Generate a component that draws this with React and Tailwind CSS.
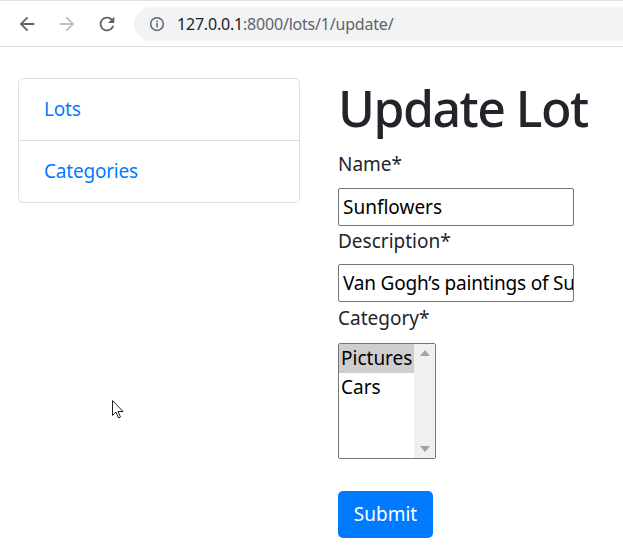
import React from "react";

const font = { fontFamily: '"Noto Sans", "Open Sans", sans-serif' };

function ChromeBar() {
  return (
    <div className="h-[47px] bg-white border-t border-[#dee1e6] border-b border-b-[#dadce0] flex items-center" style={{ fontFamily: '"Noto Sans", sans-serif' }}>
      <div className="flex items-center pl-[16px] gap-[18px]">
        <svg width="22" height="22" viewBox="0 0 24 24" className="text-[#5f6368]">
          <path d="M20 11H7.83l5.59-5.59L12 4l-8 8 8 8 1.41-1.41L7.83 13H20v-2z" fill="currentColor" />
        </svg>
        <svg width="22" height="22" viewBox="0 0 24 24" className="text-[#bdc1c6]">
          <path d="M12 4l-1.41 1.41L16.17 11H4v2h12.17l-5.58 5.59L12 20l8-8z" fill="currentColor" />
        </svg>
        <svg width="22" height="22" viewBox="0 0 24 24" className="text-[#5f6368]">
          <path d="M17.65 6.35A7.958 7.958 0 0 0 12 4c-4.42 0-7.99 3.58-7.99 8s3.57 8 7.99 8c3.73 0 6.84-2.55 7.73-6h-2.08A5.99 5.99 0 0 1 12 18c-3.31 0-6-2.69-6-6s2.69-6 6-6c1.66 0 3.14.69 4.22 1.78L13 11h7V4l-2.35 2.35z" fill="currentColor" />
        </svg>
      </div>
      <div className="ml-[16px] flex-1 h-[34px] rounded-l-full bg-[#f1f3f4] flex items-center pl-[14px]">
        <svg width="18" height="18" viewBox="0 0 24 24" className="text-[#5f6368]">
          <circle cx="12" cy="12" r="8.5" fill="none" stroke="currentColor" strokeWidth="2" />
          <rect x="11" y="10.5" width="2" height="6" fill="currentColor" />
          <rect x="11" y="7.5" width="2" height="2" fill="currentColor" />
        </svg>
        <span className="ml-[11px] text-[16px] tracking-[-0.2px]">
          <span className="text-[#202124]">127.0.0.1</span>
          <span className="text-[#5f6368]">:8000/lots/1/update/</span>
        </span>
      </div>
    </div>
  );
}

export default function App() {
  return (
    <div className="relative w-[623px] h-[555px] bg-white overflow-hidden" style={font}>
      <ChromeBar />
      <div className="flex pl-[18px] pt-[31px]">
        <div className="w-[282px] shrink-0">
          <div className="border border-[#dfdfdf] rounded-[5px]">
            <div className="px-[25px] py-[15px] leading-[31px] text-[19px] tracking-[-0.2px] text-[#007bff] border-b border-[#dfdfdf]">Lots</div>
            <div className="px-[25px] py-[15px] leading-[31px] text-[19px] tracking-[-0.2px] text-[#007bff]">Categories</div>
          </div>
        </div>
        <div className="ml-[38px] text-[#212529]">
          <h1 className="text-[50px] leading-[60px] font-medium tracking-[-1.5px] mb-[11px]">Update Lot</h1>
          <div className="text-[19px] leading-[30px]">Name*</div>
          <div className="mt-[9px] w-[236px] h-[38px] border border-[#767676] rounded-[2px] flex items-center pl-[4px] text-[19px] text-black overflow-hidden whitespace-nowrap">Sunflowers</div>
          <div className="text-[19px] leading-[30px]">Description*</div>
          <div className="mt-[8px] w-[236px] h-[38px] border border-[#767676] rounded-[2px] flex items-center pl-[4px] text-[19px] text-black overflow-hidden whitespace-nowrap tracking-[-0.2px]">Van Gogh’s paintings of Sunflowers</div>
          <div className="mt-[1px] text-[19px] leading-[30px]">Category*</div>
          <div className="mt-[10px] w-[98px] h-[116px] border border-[#767676] rounded-[2px] flex overflow-hidden">
            <div className="flex-1 text-[19px] text-black">
              <div className="bg-[#cecece] h-[29px] leading-[29px] pl-[2px] whitespace-nowrap overflow-hidden">Pictures</div>
              <div className="h-[29px] leading-[29px] pl-[2px]">Cars</div>
            </div>
            <div className="w-[21px] bg-[#f0f0f0] flex flex-col items-center justify-between py-[6px]">
              <svg width="10" height="6" viewBox="0 0 10 6"><path d="M0 6L5 0L10 6Z" fill="#a3a3a3" /></svg>
              <svg width="10" height="6" viewBox="0 0 10 6"><path d="M0 0L10 0L5 6Z" fill="#a3a3a3" /></svg>
            </div>
          </div>
          <button className="mt-[32px] w-[95px] h-[47px] bg-[#007bff] text-white text-[19px] rounded-[5px]">Submit</button>
        </div>
      </div>
      <svg className="absolute left-[112px] top-[400px]" width="13" height="20" viewBox="0 0 13 20">
        <path d="M0.5 0.5 L0.5 15.5 L4 12 L6.5 18 L8.5 17 L6 11.5 L11 11.5 Z" fill="white" stroke="#222" strokeWidth="1" strokeLinejoin="round" />
      </svg>
    </div>
  );
}
